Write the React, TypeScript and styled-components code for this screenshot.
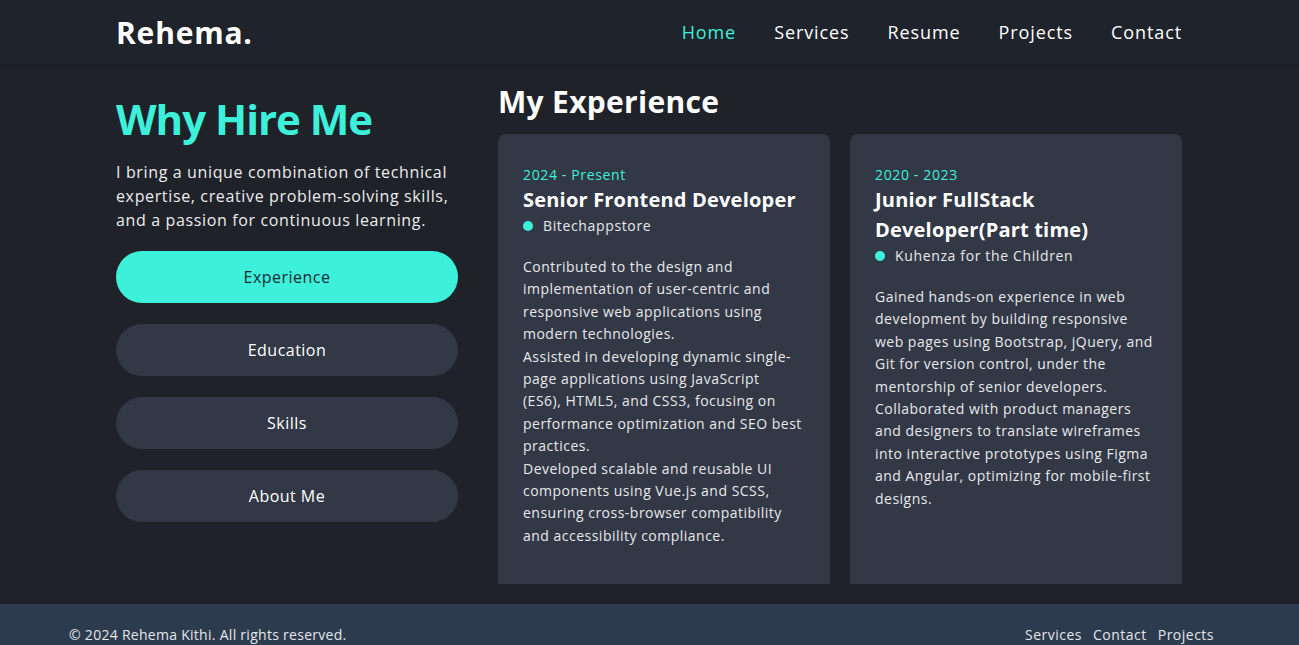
import React from "react";
import styled, { createGlobalStyle } from "styled-components";

const Global = createGlobalStyle`
  * { box-sizing: border-box; }
  html, body { margin: 0; padding: 0; background: #1f2229; }
  body { font-family: "Open Sans", "DejaVu Sans", sans-serif; color: #e8e8ea; overflow: hidden; letter-spacing: 0.04em; }
`;

const accent = "#3df0da";

const Header = styled.header`
  height: 64px;
  background: #1f232b;
  box-shadow: 0 3px 4px rgba(0, 0, 0, 0.18);
  position: relative;
  z-index: 1;
`;

const Container = styled.div`
  padding: 0 117px 0 116px;
  height: 100%;
`;

const HeaderInner = styled(Container)`
  display: flex;
  align-items: center;
  justify-content: space-between;
`;

const Logo = styled.div`
  font-size: 30px;
  font-weight: 700;
  color: #fff;
  letter-spacing: 0.8px;
`;

const Nav = styled.nav`
  display: flex;
  gap: 38px;
`;

const NavLink = styled.a<{ $active?: boolean }>`
  font-size: 18px;
  font-weight: 500;
  letter-spacing: 0.05em;
  color: ${(p) => (p.$active ? accent : "#fff")};
  text-decoration: none;
`;

const Main = styled(Container)`
  display: grid;
  grid-template-columns: 342px 684px;
  gap: 40px;
  padding-top: 20px;
  padding-bottom: 20px;
  height: auto;
`;

const Left = styled.div`
  display: flex;
  flex-direction: column;
`;

const Title = styled.h1`
  margin: 10px 0 0;
  font-size: 42px;
  line-height: 1.2;
  font-weight: 700;
  letter-spacing: -1px;
  color: ${accent};
`;

const Intro = styled.p`
  margin: 16px 0 0;
  font-size: 16px;
  line-height: 24px;
  color: #ececee;
`;

const Buttons = styled.div`
  display: flex;
  flex-direction: column;
  gap: 21px;
  margin-top: 19px;
`;

const TabButton = styled.button<{ $active?: boolean }>`
  height: 52px;
  border: none;
  border-radius: 26px;
  font-family: inherit;
  font-size: 16px;
  font-weight: 500;
  letter-spacing: 0.03em;
  background: ${(p) => (p.$active ? accent : "#323846")};
  color: ${(p) => (p.$active ? "#232833" : "#fff")};
`;

const Right = styled.div`
  display: flex;
  flex-direction: column;
`;

const SectionTitle = styled.h2`
  margin: 0;
  font-size: 30px;
  line-height: 36px;
  font-weight: 700;
  letter-spacing: 0.3px;
  color: #fff;
`;

const Cards = styled.div`
  display: grid;
  grid-template-columns: 1fr 1fr;
  gap: 20px;
  margin-top: 14px;
`;

const Card = styled.div`
  background: #323846;
  border-radius: 8px 8px 0 0;
  padding: 31px 25px 37px;
`;

const Date = styled.div`
  font-size: 14px;
  line-height: 20px;
  color: ${accent};
`;

const Role = styled.h3`
  margin: 0;
  font-size: 20px;
  line-height: 30px;
  font-weight: 700;
  letter-spacing: 0.2px;
  color: #fff;
`;

const Company = styled.div`
  display: flex;
  align-items: center;
  gap: 10px;
  font-size: 14px;
  line-height: 22px;
  color: #e8e8ea;
  &::before {
    content: "";
    width: 10px;
    height: 10px;
    border-radius: 50%;
    background: ${accent};
  }
`;

const Desc = styled.p`
  margin: 19px 0 0;
  font-size: 14px;
  line-height: 22.4px;
  letter-spacing: 0.035em;
  color: #e8e8eb;
`;

const Footer = styled.footer`
  background: #2d3b4e;
  height: 60px;
`;

const FooterInner = styled.div`
  display: flex;
  justify-content: space-between;
  padding: 21px 85px 0 69px;
  font-size: 14px;
  letter-spacing: 0.02em;
  color: #e4e6ea;
`;

const FooterLinks = styled.div`
  display: flex;
  gap: 11px;
  letter-spacing: 0.035em;
`;

const experiences = [
  {
    date: "2024 - Present",
    role: "Senior Frontend Developer",
    company: "Bitechappstore",
    desc: [
      "Contributed to the design and implementation of user-centric and responsive web applications using modern technologies.",
      "Assisted in developing dynamic single-page applications using JavaScript (ES6),\u00a0HTML5, and CSS3, focusing on performance optimization and SEO best practices.",
      "Developed scalable and reusable UI components using Vue.js and SCSS, ensuring cross-browser compatibility and accessibility compliance.",
    ],
  },
  {
    date: "2020 - 2023",
    role: "Junior FullStack Developer(Part time)",
    company: "Kuhenza for the Children",
    desc: [
      "Gained hands-on experience in web development by building responsive web pages using Bootstrap, jQuery, and Git for version control, under the mentorship of senior developers.",
      "Collaborated with product managers and designers to translate wireframes into interactive prototypes using Figma and Angular, optimizing for mobile-first designs.",
    ],
  },
];

export default function App() {
  return (
    <>
      <Global />
      <Header>
        <HeaderInner>
          <Logo>Rehema.</Logo>
          <Nav>
            <NavLink $active>Home</NavLink>
            <NavLink>Services</NavLink>
            <NavLink>Resume</NavLink>
            <NavLink>Projects</NavLink>
            <NavLink>Contact</NavLink>
          </Nav>
        </HeaderInner>
      </Header>
      <Main>
        <Left>
          <Title>Why Hire Me</Title>
          <Intro>
            I bring a unique combination of technical expertise, creative problem-solving skills, and a passion for
            continuous learning.
          </Intro>
          <Buttons>
            <TabButton $active>Experience</TabButton>
            <TabButton>Education</TabButton>
            <TabButton>Skills</TabButton>
            <TabButton>About Me</TabButton>
          </Buttons>
        </Left>
        <Right>
          <SectionTitle>My Experience</SectionTitle>
          <Cards>
            {experiences.map((e) => (
              <Card key={e.role}>
                <Date>{e.date}</Date>
                <Role>{e.role}</Role>
                <Company>{e.company}</Company>
                <Desc>
                  {e.desc.map((d, i) => (
                    <React.Fragment key={i}>
                      {i > 0 && <br />}
                      {d}
                    </React.Fragment>
                  ))}
                </Desc>
              </Card>
            ))}
          </Cards>
        </Right>
      </Main>
      <Footer>
        <FooterInner>
          <span>© 2024 Rehema Kithi. All rights reserved.</span>
          <FooterLinks>
            <span>Services</span>
            <span>Contact</span>
            <span>Projects</span>
          </FooterLinks>
        </FooterInner>
      </Footer>
    </>
  );
}
